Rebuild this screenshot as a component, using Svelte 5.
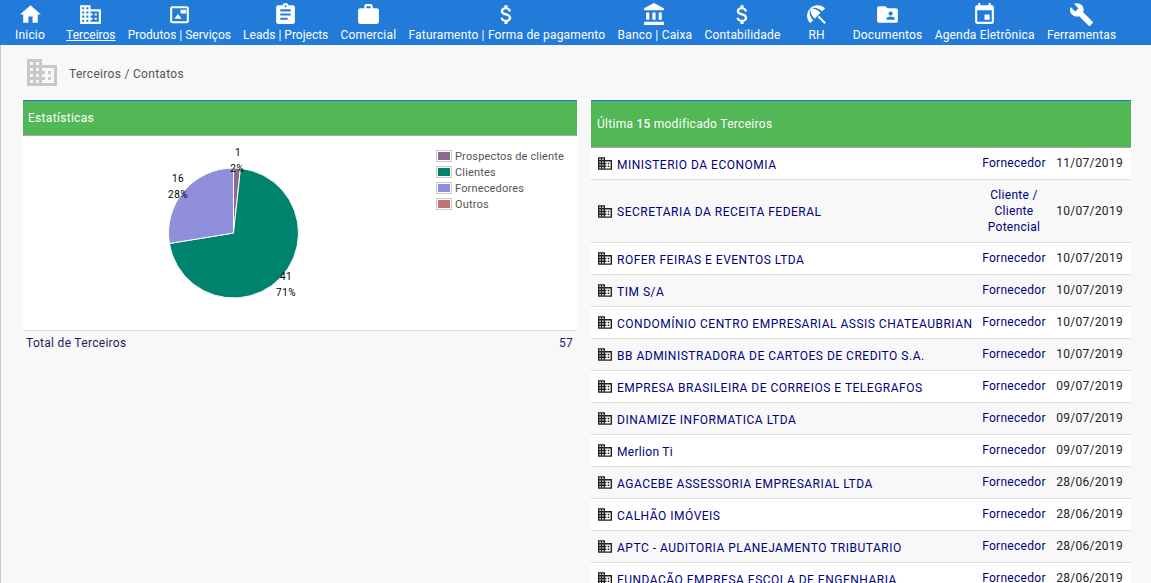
<script>
	const icons = {
		home: 'M10 20v-6h4v6h5v-8h3L12 3 2 12h3v8z',
		domain: 'M12 7V3H2v18h20V7H12zM6 19H4v-2h2v2zm0-4H4v-2h2v2zm0-4H4V9h2v2zm0-4H4V5h2v2zm4 12H8v-2h2v2zm0-4H8v-2h2v2zm0-4H8V9h2v2zm0-4H8V5h2v2zm10 12h-8v-2h2v-2h-2v-2h2v-2h-2V9h8v10zm-2-8h-2v2h2v-2zm0 4h-2v2h2v-2z',
		picture: 'M5 4h14a2 2 0 0 1 2 2v12.5a2 2 0 0 1-2 2H5a2 2 0 0 1-2-2V6a2 2 0 0 1 2-2zM5 6v12.5h14V6H5zM7 16l3.5-4.5L14 16H7zM13 7.5h5.5V11H13z',
		assignment: 'M19 3h-4.18C14.4 1.84 13.3 1 12 1c-1.3 0-2.4.84-2.82 2H5c-1.1 0-2 .9-2 2v14c0 1.1.9 2 2 2h14c1.1 0 2-.9 2-2V5c0-1.1-.9-2-2-2zm-7 0c.55 0 1 .45 1 1s-.45 1-1 1-1-.45-1-1 .45-1 1-1zm2 14H7v-2h7v2zm3-4H7v-2h10v2zm0-4H7V7h10v2z',
		work: 'M20 6h-4V4c0-1.11-.89-2-2-2h-4c-1.11 0-2 .89-2 2v2H4c-1.11 0-1.99.89-1.99 2L2 19c0 1.11.89 2 2 2h16c1.11 0 2-.89 2-2V8c0-1.11-.89-2-2-2zm-6 0h-4V4h4v2z',
		money: 'M11.8 10.9c-2.27-.59-3-1.2-3-2.15 0-1.09 1.01-1.85 2.7-1.85 1.78 0 2.44.85 2.5 2.1h2.21c-.07-1.72-1.12-3.3-3.21-3.81V3h-3v2.16c-1.94.42-3.5 1.68-3.5 3.61 0 2.31 1.91 3.46 4.7 4.13 2.5.6 3 1.48 3 2.41 0 .69-.49 1.79-2.7 1.79-2.06 0-2.87-.92-2.98-2.1h-2.2c.12 2.19 1.76 3.42 3.68 3.83V21h3v-2.15c1.95-.37 3.5-1.5 3.5-3.55 0-2.84-2.43-3.81-4.7-4.4z',
		bank: 'M4 10v7h3v-7H4zm6 0v7h3v-7h-3zM2 22h19v-3H2v3zm14-12v7h3v-7h-3zm-4.5-9L2 6v2h19V6l-9.5-5z',
		beach: 'M13.127 14.56l1.43-1.43 6.44 6.443L19.57 21zm4.293-5.73l2.86-2.86c-3.95-3.95-10.35-3.96-14.3-.02 3.93-1.3 8.31-.25 11.44 2.88zM5.95 5.98c-3.94 3.95-3.93 10.35.02 14.3l2.86-2.86C5.7 14.29 4.65 9.91 5.95 5.98zm.02-.02l-.01.01c-.38 3.01 1.17 6.88 4.3 10.02l5.73-5.73c-3.13-3.13-7.01-4.68-10.02-4.3z',
		folder: 'M20 6h-8l-2-2H4c-1.1 0-1.99.9-1.99 2L2 18c0 1.1.9 2 2 2h16c1.1 0 2-.9 2-2V8c0-1.1-.9-2-2-2zm-5 3c1.1 0 2 .9 2 2s-.9 2-2 2-2-.9-2-2 .9-2 2-2zm4 8h-8v-1c0-1.33 2.67-2 4-2s4 .67 4 2v1z',
		event: 'M17 12h-5v5h5v-5zM16 1v2H8V1H6v2H5c-1.11 0-1.99.9-1.99 2L3 19c0 1.1.89 2 2 2h14c1.1 0 2-.9 2-2V5c0-1.1-.9-2-2-2h-1V1h-2zm3 18H5V8h14v11z',
		build: 'M22.7 19l-9.1-9.1c.9-2.3.4-5-1.5-6.9-2-2-5-2.4-7.4-1.3L9 6 6 9 1.6 4.7C.4 7.1.9 10.1 2.9 12.1c1.9 1.9 4.6 2.4 6.9 1.5l9.1 9.1c.4.4 1 .4 1.4 0l2.3-2.3c.5-.4.5-1.1.1-1.4z'
	}

	const menu = [
		{ label: 'Inicio', icon: 'home' },
		{ label: 'Terceiros', icon: 'domain', active: true, tight: true },
		{ label: 'Produtos | Serviços', icon: 'picture', tight: true },
		{ label: 'Leads | Projects', icon: 'assignment', tight: true },
		{ label: 'Comercial', icon: 'work' },
		{ label: 'Faturamento | Forma de pagamento', icon: 'money' },
		{ label: 'Banco | Caixa', icon: 'bank' },
		{ label: 'Contabilidade', icon: 'money' },
		{ label: 'RH', icon: 'beach' },
		{ label: 'Documentos', icon: 'folder' },
		{ label: 'Agenda Eletrônica', icon: 'event' },
		{ label: 'Ferramentas', icon: 'build' }
	]

	const legend = [
		{ label: 'Prospectos de cliente', color: '#8a6a8e' },
		{ label: 'Clientes', color: '#00836c' },
		{ label: 'Fornecedores', color: '#8f8fdc' },
		{ label: 'Outros', color: '#bc7474' }
	]

	const rows = [
		['MINISTERIO DA ECONOMIA', 'Fornecedor', '11/07/2019'],
		['SECRETARIA DA RECEITA FEDERAL', 'Cliente / Cliente Potencial', '10/07/2019'],
		['ROFER FEIRAS E EVENTOS LTDA', 'Fornecedor', '10/07/2019'],
		['TIM S/A', 'Fornecedor', '10/07/2019'],
		['CONDOMÍNIO CENTRO EMPRESARIAL ASSIS CHATEAUBRIAN', 'Fornecedor', '10/07/2019'],
		['BB ADMINISTRADORA DE CARTOES DE CREDITO S.A.', 'Fornecedor', '10/07/2019'],
		['EMPRESA BRASILEIRA DE CORREIOS E TELEGRAFOS', 'Fornecedor', '09/07/2019'],
		['DINAMIZE INFORMATICA LTDA', 'Fornecedor', '09/07/2019'],
		['Merlion Ti', 'Fornecedor', '09/07/2019'],
		['AGACEBE ASSESSORIA EMPRESARIAL LTDA', 'Fornecedor', '28/06/2019'],
		['CALHÃO IMÓVEIS', 'Fornecedor', '28/06/2019'],
		['APTC - AUDITORIA PLANEJAMENTO TRIBUTARIO', 'Fornecedor', '28/06/2019'],
		['FUNDAÇÃO EMPRESA ESCOLA DE ENGENHARIA', 'Fornecedor', '28/06/2019']
	]

	// pie slices, clockwise from the top
	const cx = 233.5
	const cy = 233
	const r = 65
	function slice(from, to) {
		const a = (from * Math.PI) / 180
		const b = (to * Math.PI) / 180
		const large = to - from > 180 ? 1 : 0
		return `M${cx} ${cy}L${cx + r * Math.sin(a)} ${cy - r * Math.cos(a)}A${r} ${r} 0 ${large} 1 ${cx + r * Math.sin(b)} ${cy - r * Math.cos(b)}Z`
	}
	const slices = [
		{ d: slice(0, 6.2), color: '#8a6a8e' },
		{ d: slice(6.2, 260.7), color: '#00836c' },
		{ d: slice(260.7, 360), color: '#8f8fdc' }
	]
	const labels = [
		{ x: 238, y: 156, t: '1' },
		{ x: 237, y: 172, t: '2%' },
		{ x: 178, y: 182, t: '16' },
		{ x: 178, y: 198, t: '28%' },
		{ x: 286, y: 280, t: '41' },
		{ x: 286, y: 296, t: '71%' }
	]
</script>

<nav class="topbar">
	{#each menu as item}
		<div class="menu-item" class:active={item.active} class:tight={item.tight}>
			<svg class="menu-icon" viewBox="0 0 24 24"><path d={icons[item.icon]} /></svg>
			<span>{item.label}</span>
		</div>
	{/each}
</nav>

<main class="page">
	<div class="crumb">
		<svg class="crumb-icon" viewBox="2 3 20 18"><path d={icons.domain} /></svg>
		<span>Terceiros / Contatos</span>
	</div>

	<div class="columns">
		<section class="left">
			<h2 class="panel-head small">Estatísticas</h2>
			<div class="chart">
				<svg class="pie" viewBox="0 136 554 194" width="554" height="194">
					<g transform="translate(-23 0)">
						{#each slices as s}
							<path d={s.d} fill={s.color} stroke="#fff" stroke-width="1" />
						{/each}
						{#each labels as l}
							<text x={l.x} y={l.y} text-anchor="middle">{l.t}</text>
						{/each}
					</g>
				</svg>
				<ul class="legend">
					{#each legend as l}
						<li><i style="background-color:{l.color}"></i>{l.label}</li>
					{/each}
				</ul>
			</div>
			<div class="total">
				<span>Total de Terceiros</span>
				<span>57</span>
			</div>
		</section>

		<section class="right">
			<h2 class="panel-head">Última <b>15</b> modificado Terceiros</h2>
			{#each rows as row, i}
				<div class="row" class:odd={i % 2 == 1} class:wrapped={row[1].length > 12}>
					<div class="name">
						<svg class="row-icon" viewBox="2 3 20 18"><path d={icons.domain} /></svg>
						<span class:upper={row[0] == row[0].toUpperCase()}>{row[0]}</span>
					</div>
					<div class="type">{row[1]}</div>
					<div class="date">{row[2]}</div>
				</div>
			{/each}
		</section>
	</div>
</main>

<style>
	:global(body) {
		background: #f8f8f8;
		font-family: Roboto, 'Liberation Sans', sans-serif;
		height: 583px;
		overflow: hidden;
	}

	.topbar {
		display: flex;
		height: 45px;
		background: #227bd9;
		color: #fff;
	}

	.menu-item {
		box-sizing: border-box;
		min-width: 60px;
		padding: 2px 6.1px 0;
		display: flex;
		flex-direction: column;
		align-items: center;
		font-size: 12px;
		letter-spacing: 0.18px;
		white-space: nowrap;
		line-height: 14px;
	}

	.menu-item.tight {
		letter-spacing: 0;
	}

	.menu-item.active span {
		text-decoration: underline;
	}

	.menu-icon {
		width: 25px;
		height: 25px;
		fill: #fff;
		margin-bottom: 1px;
	}

	.page {
		border-left: 1px solid #ccc;
		height: 538px;
		box-sizing: border-box;
	}

	.crumb {
		display: flex;
		align-items: center;
		height: 55px;
		padding-left: 26px;
		font-size: 12px;
		letter-spacing: 0.3px;
		color: #555;
	}

	.crumb span {
		padding-top: 2px;
	}

	.crumb-icon {
		width: 30px;
		height: 27px;
		fill: #c8c8c8;
		margin-right: 12px;
	}

	.columns {
		display: flex;
		align-items: flex-start;
		gap: 14px;
		padding-left: 22px;
	}

	.left {
		width: 554px;
	}

	.right {
		width: 540px;
	}

	.panel-head {
		margin: 0;
		box-sizing: border-box;
		height: 48px;
		padding-left: 6px;
		display: flex;
		align-items: center;
		gap: 3px;
		background: #52b755;
		border-top: 1px solid #227bd9;
		border-bottom: 1px solid #aaa;
		color: #fff;
		font-size: 12px;
		font-weight: 400;
		letter-spacing: 0.3px;
	}

	.panel-head.small {
		height: 36px;
		padding-left: 5px;
	}

	.panel-head b {
		font-weight: 500;
	}

	.chart {
		position: relative;
		height: 194px;
		background: #fff;
		border-bottom: 1px solid #ddd;
	}

	.pie {
		display: block;
	}

	.pie text {
		font-size: 10px;
		fill: #000;
		letter-spacing: 0.4px;
	}

	.legend {
		position: absolute;
		left: 413px;
		top: 12px;
		margin: 0;
		padding: 0;
		list-style: none;
		font-size: 11px;
		letter-spacing: 0.16px;
		color: #555;
	}

	.legend li {
		display: flex;
		align-items: center;
		height: 16px;
	}

	.legend i {
		box-sizing: border-box;
		width: 16px;
		height: 12px;
		margin-right: 3px;
		border: 1px solid #ccc;
		background-clip: content-box;
		padding: 1px;
	}

	.total {
		display: flex;
		justify-content: space-between;
		padding: 4px 4px 4px 3px;
		font-size: 12px;
		letter-spacing: 0.3px;
		line-height: 16px;
		color: #1d1d66;
	}

	.row {
		display: grid;
		grid-template-columns: 1fr 82px 76px;
		align-items: center;
		background: #fff;
		border-bottom: 1px solid #ddd;
		font-size: 12px;
		letter-spacing: 0.3px;
		line-height: 16px;
		color: #00007f;
	}

	.row.odd {
		background: #f8f8f8;
	}

	.name {
		display: flex;
		align-items: center;
		gap: 5px;
		padding-left: 7px;
		white-space: nowrap;
	}

	.name span {
		padding-top: 2px;
	}

	.name .upper {
		letter-spacing: 0.5px;
	}

	.row-icon {
		width: 14px;
		height: 13px;
		fill: #222;
	}

	.type {
		padding: 7px 0 8px;
		text-align: center;
	}

	.wrapped .type {
		padding-bottom: 7px;
	}

	.date {
		padding: 7px 8px 8px 0;
		text-align: right;
		color: #222;
	}
</style>
